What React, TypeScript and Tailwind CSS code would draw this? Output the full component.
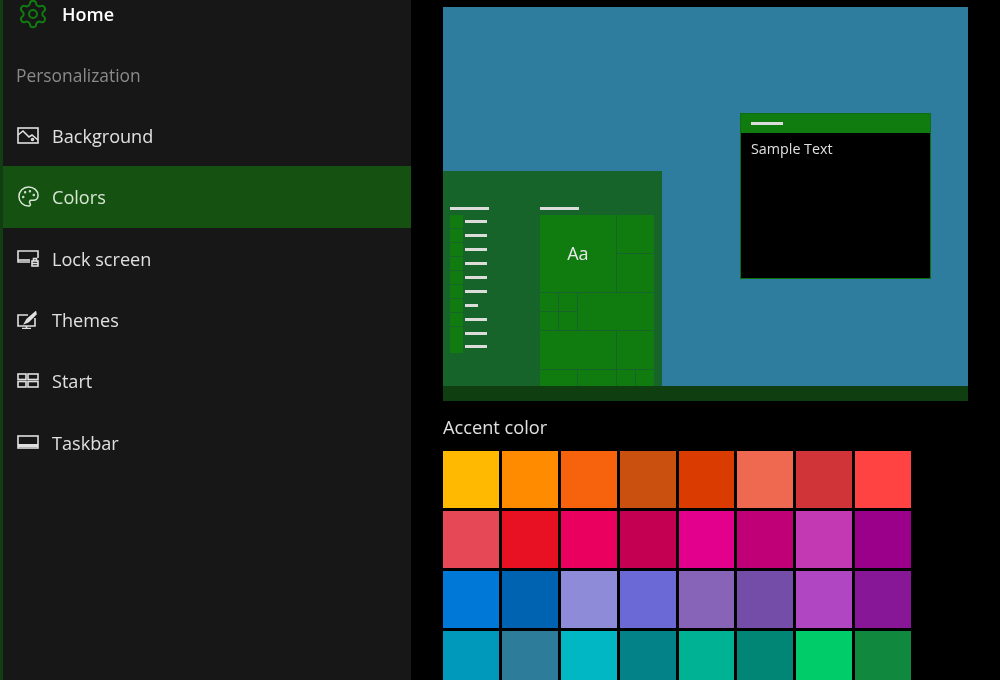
import { Palette, Settings } from 'lucide-react';
import type { ReactNode } from 'react';

const FONT = '[font-family:"Open_Sans","Noto_Sans",sans-serif]';

const ImageIcon = () => (
  <svg width="22" height="17" viewBox="0 0 22 17" fill="none" stroke="currentColor" strokeWidth="1.6">
    <rect x="1" y="1" width="20" height="15" />
    <path d="M1 8l5-4 6 6 3-2 6 5" />
    <circle cx="15.5" cy="12.5" r="1" />
  </svg>
);

const LockIcon = () => (
  <svg width="22" height="17" viewBox="0 0 22 17" fill="none" stroke="currentColor" strokeWidth="1.6">
    <path d="M13 12H1V1h20v7" />
    <path d="M1 10h12" />
    <rect x="15" y="11" width="6" height="5" />
    <path d="M16.5 11V8.5h3V11M15 13.5h6" />
  </svg>
);

const ThemesIcon = () => (
  <svg width="20" height="18" viewBox="0 0 20 18" fill="none" stroke="currentColor" strokeWidth="1.6">
    <path d="M11 4H1v11h17V7" />
    <path d="M5 17.5h9M9.5 15v2" />
    <path d="M18.5 1L10 8.5l-2 3.5 3.5-1.5L19 3z" fill="currentColor" />
  </svg>
);

const StartIcon = () => (
  <svg width="22" height="15" viewBox="0 0 22 15" fill="none" stroke="currentColor" strokeWidth="1.6">
    <rect x="1" y="1" width="8" height="5.5" />
    <rect x="11" y="1" width="10" height="5.5" />
    <rect x="1" y="8.5" width="8" height="5.5" />
    <rect x="11" y="8.5" width="10" height="5.5" />
  </svg>
);

const TaskbarIcon = () => (
  <svg width="22" height="14" viewBox="0 0 22 14" fill="none" stroke="currentColor" strokeWidth="1.6">
    <rect x="1" y="1" width="20" height="12" />
    <path d="M1 10.5h20" strokeWidth="3" />
  </svg>
);

const navItems: { label: string; icon: ReactNode; active?: boolean }[] = [
  { label: 'Background', icon: <ImageIcon /> },
  { label: 'Colors', icon: <Palette size={23} strokeWidth={1.6} />, active: true },
  { label: 'Lock screen', icon: <LockIcon /> },
  { label: 'Themes', icon: <ThemesIcon /> },
  { label: 'Start', icon: <StartIcon /> },
  { label: 'Taskbar', icon: <TaskbarIcon /> },
];

const swatches = [
  '#ffb900', '#ff8c00', '#f7630c', '#ca5010', '#da3b01', '#ef6950', '#d13438', '#ff4343',
  '#e74856', '#e81123', '#ea005e', '#c30052', '#e3008c', '#bf0077', '#c239b3', '#9a0089',
  '#0078d7', '#0063b1', '#8e8cd8', '#6b69d6', '#8764b8', '#744da9', '#b146c2', '#881798',
  '#0099bc', '#2d7d9a', '#00b7c3', '#038387', '#00b294', '#018574', '#00cc6a', '#10893e',
];

const listLines = [22, 22, 22, 22, 22, 22, 13, 22, 22, 22];

const Tile = ({ className, children }: { className: string; children?: ReactNode }) => (
  <div className={`bg-[#107c10] ${className}`}>{children}</div>
);

const StartMenu = () => (
  <div className="flex h-[215px] w-[219px] gap-[51px] bg-[#17642b] pl-[7px] pt-[36px]">
    <div>
      <div className="h-[3px] w-[39px] bg-[#dcdcdc] blur-[0.3px]" />
      <div className="mt-[5px] flex flex-col">
        {listLines.map((w, i) => (
          <div key={i} className="flex h-[13.9px] items-center gap-[2px]">
            <div className="h-[13px] w-[13px] bg-[#107c10]" />
            <div className="h-[3px] bg-[#dcdcdc] blur-[0.3px]" style={{ width: w }} />
          </div>
        ))}
      </div>
    </div>
    <div>
      <div className="h-[3px] w-[39px] bg-[#dcdcdc] blur-[0.3px]" />
      <div className="mt-[5px] grid h-[171px] w-[114px] grid-cols-6 auto-rows-[18.4px] gap-px overflow-hidden">
        <Tile className="col-span-4 row-span-4 flex items-center justify-center">
          <span className={`${FONT} text-[18px] text-[#e8e8e8] blur-[0.4px]`}>Aa</span>
        </Tile>
        <Tile className="col-span-2 row-span-2" />
        <Tile className="col-span-2 row-span-2" />
        <Tile className="col-span-1 row-span-1" />
        <Tile className="col-span-1 row-span-1" />
        <Tile className="col-span-4 row-span-2" />
        <Tile className="col-span-1 row-span-1" />
        <Tile className="col-span-1 row-span-1" />
        <Tile className="col-span-4 row-span-2" />
        <Tile className="col-span-2 row-span-2" />
        <Tile className="col-span-2 row-span-2" />
        <Tile className="col-span-2 row-span-2" />
        <Tile className="col-span-1 row-span-2" />
        <Tile className="col-span-1 row-span-2" />
      </div>
    </div>
  </div>
);

const Preview = () => (
  <div className="relative flex h-[394px] w-[525px] flex-col bg-[#2f7d9e]">
    <div className="flex flex-1 items-end">
      <StartMenu />
    </div>
    <div className="h-[15px] bg-[#0f3f10]" />
    {/* sample window */}
    <div className="absolute left-[297px] top-[106px] h-[166px] w-[191px] border border-[#0f6e10] bg-black">
      <div className="flex h-[19px] items-center bg-[#107c10] pl-[10px]">
        <div className="h-[3px] w-[32px] bg-[#dcdcdc] blur-[0.3px]" />
      </div>
      <div className={`${FONT} pl-[10px] pt-[6px] text-[14.3px] leading-5 text-[#e0e0e0] blur-[0.4px]`}>Sample Text</div>
    </div>
  </div>
);

export default function App() {
  return (
    <div className={`${FONT} flex h-[680px] w-[1000px] overflow-hidden bg-black`}>
      <div className="h-full w-[411px] shrink-0 border-l-[3px] border-[#123d12] bg-[#171717]">
        <div className="flex h-[28px] items-center pl-[14px]">
          <Settings size={32} strokeWidth={1.5} className="text-[#107c10]" />
          <span className="ml-[13px] text-[18px] font-semibold text-white blur-[0.4px]">Home</span>
        </div>
        <div className="flex h-[68px] items-center pl-[13px] pt-[27px] text-[17.4px] text-[#8a8a8a] blur-[0.4px]">Personalization</div>
        <div className="mt-[9px] flex flex-col">
          {navItems.map((item) => (
            <div
              key={item.label}
              className={`flex h-[61.3px] items-center pl-[14px] text-[18.1px] blur-[0.4px] ${
                item.active ? 'bg-[#155212] text-[#d8e6d4]' : 'text-[#e0e0e0]'
              }`}
            >
              <div className="flex w-[35px] shrink-0 items-center">{item.icon}</div>
              <span className="pt-[2px]">{item.label}</span>
            </div>
          ))}
        </div>
      </div>

      <div className="flex-1 pl-[32px] pt-[7px]">
        <Preview />
        <div className="mt-[14px] text-[18.2px] leading-6 text-[#e0e0e0] blur-[0.4px]">Accent color</div>
        <div className="mt-[12px] grid w-[468px] grid-cols-8 gap-x-[3px] gap-y-[3px]">
          {swatches.map((c) => (
            <div key={c} className="h-[57px]" style={{ backgroundColor: c }} />
          ))}
        </div>
      </div>
    </div>
  );
}
